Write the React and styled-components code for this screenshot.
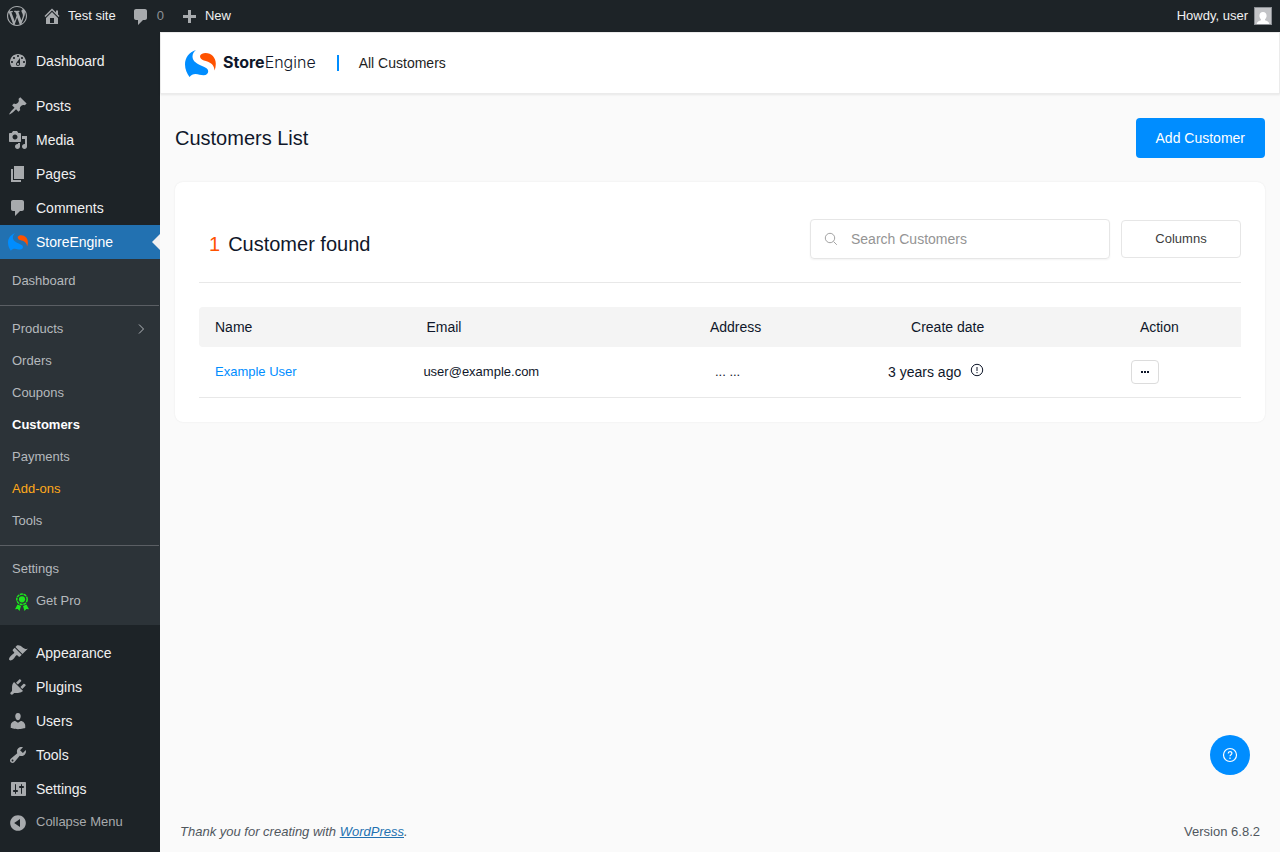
import React from "react";
import styled, { createGlobalStyle } from "styled-components";

const GlobalStyle = createGlobalStyle`
  * { box-sizing: border-box; }
  body {
    margin: 0;
    background: #fafafa;
    color: #0f172a;
    font-family: "Liberation Sans", Arial, sans-serif;
    font-size: 13px;
  }
  a { text-decoration: none; color: inherit; }
  button, input { font-family: inherit; }
`;

const paths = {
  wordpress: "M20 10c0-5.51-4.49-10-10-10C4.48 0 0 4.49 0 10c0 5.52 4.48 10 10 10 5.51 0 10-4.48 10-10zM7.78 15.37L4.37 6.22c.55-.02 1.17-.08 1.17-.08.5-.06.44-1.13-.06-1.11 0 0-1.45.11-2.37.11-.18 0-.37 0-.58-.01C4.12 2.69 6.87 1.11 10 1.11c2.33 0 4.45.87 6.05 2.34-.68-.11-1.65.39-1.65 1.58 0 .74.45 1.36.9 2.1.35.61.55 1.36.55 2.46 0 1.49-1.4 5-1.4 5l-3.03-8.37c.54-.02.82-.17.82-.17.5-.05.44-1.25-.06-1.22 0 0-1.44.12-2.38.12-.87 0-2.33-.12-2.33-.12-.5-.03-.56 1.2-.06 1.22l.92.08 1.26 3.41zM17.41 10c.24-.64.74-1.87.43-4.25.7 1.29 1.05 2.71 1.05 4.25 0 3.29-1.73 6.24-4.4 7.78.97-2.59 1.94-5.2 2.92-7.78zM6.1 18.09C3.12 16.65 1.11 13.53 1.11 10c0-1.3.23-2.48.72-3.59C3.25 10.3 4.67 14.2 6.1 18.09zm4.03-6.63l2.58 6.98c-.86.29-1.76.45-2.71.45-.79 0-1.57-.11-2.29-.33.81-2.38 1.62-4.74 2.42-7.1z",
  home: "M16 8.5l1.53 1.53-1.06 1.06L10 4.6l-6.47 6.49-1.06-1.06L10 2.5l4 4v-2h2v4zm-6-2.46l6 5.99V18H4v-5.97zM12 17v-5H8v5h4z",
  comments: "M5 2h9c1.1 0 2 .9 2 2v7c0 1.1-.9 2-2 2h-2l-5 5v-5H5c-1.1 0-2-.9-2-2V4c0-1.1.9-2 2-2z",
  barComments: "M5 3h9c1.1 0 2 .9 2 2v7c0 1.1-.9 2-2 2h-2l-5 5v-5H5c-1.1 0-2-.9-2-2V5c0-1.1.9-2 2-2z",
  plus: "M17 9v3h-5v5H9v-5H4V9h5V4h3v5h5z",
  dashboard: "M3.76 16h12.48c1.1-1.37 1.76-3.11 1.76-5 0-4.42-3.58-8-8-8s-8 3.58-8 8c0 1.89.66 3.63 1.76 5zM10 4c.55 0 1 .45 1 1s-.45 1-1 1-1-.45-1-1 .45-1 1-1zM6 6c.55 0 1 .45 1 1s-.45 1-1 1-1-.45-1-1 .45-1 1-1zm8 0c.55 0 1 .45 1 1s-.45 1-1 1-1-.45-1-1 .45-1 1-1zm-5.37 5.55L12 7v6c0 1.1-.9 2-2 2s-2-.9-2-2c0-.57.24-1.08.63-1.45zM4 10c.55 0 1 .45 1 1s-.45 1-1 1-1-.45-1-1 .45-1 1-1zm12 0c.55 0 1 .45 1 1s-.45 1-1 1-1-.45-1-1 .45-1 1-1zm-5 3c0-.55-.45-1-1-1s-1 .45-1 1 .45 1 1 1 1-.45 1-1z",
  posts: "M10.44 3.02l1.82-1.82 6.36 6.35-1.83 1.82c-1.05-.68-2.48-.57-3.41.36l-.75.75c-.92.93-1.04 2.35-.35 3.41l-1.83 1.82-2.41-2.41-2.8 2.79c-.42.42-3.38 2.71-3.8 2.29s1.86-3.39 2.28-3.81l2.79-2.79L4.1 9.36l1.83-1.82c1.05.69 2.48.57 3.4-.36l.75-.75c.93-.92 1.05-2.35.36-3.41z",
  media: "M13 11V4c0-.55-.45-1-1-1h-1.67L9 1H5L3.67 3H2c-.55 0-1 .45-1 1v7c0 .55.45 1 1 1h10c.55 0 1-.45 1-1zM7 4.5c1.38 0 2.5 1.12 2.5 2.5S8.38 9.5 7 9.5 4.5 8.38 4.5 7 5.62 4.5 7 4.5zM14 6h5v10.5c0 1.38-1.12 2.5-2.5 2.5S14 17.88 14 16.5s1.12-2.5 2.5-2.5c.17 0 .34.02.5.05V9h-3V6zm-4 8.05V13h2v3.5c0 1.38-1.12 2.5-2.5 2.5S7 17.88 7 16.5 8.12 14 9.5 14c.17 0 .34.02.5.05z",
  pages: "M6 15V2h10v13H6zm-1 1h8v2H3V5h2v11z",
  appearance: "M14.48 11.06L7.41 3.99l1.5-1.5c.5-.56 2.3-.47 3.51.32 1.21.8 1.43 1.28 2.91 2.1 1.18.64 2.45 1.26 4.45.85zm-.71.71L6.7 4.7 4.93 6.47c-.39.39-.39 1.02 0 1.41l1.06 1.06c.39.39.39 1.03 0 1.42-.6.6-1.43 1.11-2.21 1.69-.35.26-.7.53-1.01.84C1.43 14.23.4 16.08 1.4 17.07c.99 1 2.84-.03 4.18-1.36.31-.31.58-.66.85-1.02.57-.78 1.08-1.61 1.69-2.21.39-.39 1.02-.39 1.41 0l1.06 1.06c.39.39 1.02.39 1.41 0z",
  plugins: "M13.11 4.36L9.87 7.6 8 5.73l3.24-3.24c.35-.34 1.05-.2 1.56.32.52.51.66 1.21.31 1.55zm-8 1.77l.91-1.12 9.01 9.01-1.19.84c-.71.71-2.63 1.16-3.82 1.16H6.14L4.9 17.26c-.59.59-1.54.59-2.12 0-.59-.58-.59-1.53 0-2.12l1.24-1.24v-3.88c0-1.13.4-3.19 1.09-3.89zm7.26 3.97l3.24-3.24c.34-.35 1.04-.21 1.55.31.52.51.66 1.21.31 1.55l-3.24 3.25z",
  users: "M10 9.25c-2.27 0-2.73-3.44-2.73-3.44C7 4.02 7.82 2 9.97 2c2.16 0 2.98 2.02 2.71 3.81 0 0-.41 3.44-2.68 3.44zm0 2.57L12.72 10c2.39 0 4.52 2.33 4.52 4.53v2.49s-3.65 1.13-7.24 1.13c-3.65 0-7.24-1.13-7.24-1.13v-2.49c0-2.25 1.94-4.48 4.47-4.48z",
  tools: "M16.68 9.77c-1.34 1.34-3.3 1.67-4.95.99l-5.41 6.52c-.99.99-2.59.99-3.58 0s-.99-2.59 0-3.57l6.52-5.42c-.68-1.65-.35-3.61.99-4.95 1.28-1.28 3.12-1.62 4.72-1.06l-2.89 2.89 2.82 2.82 2.86-2.87c.53 1.58.18 3.39-1.08 4.65zM3.81 16.21c.4.39 1.04.39 1.43 0 .4-.4.4-1.04 0-1.43-.39-.4-1.03-.4-1.43 0-.39.39-.39 1.03 0 1.43z",
  settings: "M18 16V4c0-.55-.45-1-1-1H4c-.55 0-1 .45-1 1v12c0 .55.45 1 1 1h13c.55 0 1-.45 1-1zM8 11h1c.55 0 1 .45 1 1s-.45 1-1 1H8v1.500c0 .28-.22.5-.5.5s-.5-.22-.5-.5V13H6c-.55 0-1-.45-1-1s.45-1 1-1h1V5.500c0-.28.22-.5.5-.5s.5.22.5.5V11zm5-2h-1c-.55 0-1-.45-1-1s.45-1 1-1h1V5.500c0-.28.22-.5.5-.5s.5.22.5.5V7h1c.55 0 1 .45 1 1s-.45 1-1 1h-1v5.500c0 .28-.22.5-.5.5s-.5-.22-.5-.5V9z",
  collapse: "M10 2.16c4.33 0 7.84 3.51 7.84 7.84s-3.51 7.84-7.84 7.84S2.16 14.33 2.16 10 5.71 2.16 10 2.16zm2 11.72V6.12L6.18 9.97z",
};

const Svg = styled.svg`
  display: block;
  flex: none;
  fill: ${(props) => props.$color || "#a7aaad"};
`;

const Icon = ({ name, size = 20, color }) => (
  <Svg width={size} height={size} viewBox="0 0 20 20" $color={color} aria-hidden="true">
    <path fillRule="evenodd" d={paths[name]} />
  </Svg>
);

const Mark = ({ width, height }) => (
  <Svg width={width} height={height} viewBox="0 0 31 27" aria-hidden="true">
    <path
      fill="#008dff"
      d="M11 0C4 2 0 8 0 14.500c0 5 2 9 4.500 12.500 1.500-2 3.500-3 6-3 3 0 5 1.300 8 1.300 3.200 0 4.700-1.800 4.700-4 0-2.300-2-3.500-5-4.800C12 13.800 7.500 11.500 7.500 6.500 7.500 3.500 9 1.500 11 0z"
    />
    <path
      fill="#ff5200"
      d="M15.200 5.500C16 3.700 18 2.900 20.500 2.900c6 0 10.300 4.600 10.300 10.800 0 2.300-.4 4.500-1.200 6.700-.3-4.400-2.600-7-6.600-8.700-3-1.200-5.500-1.200-7-3-.7-.8-1.200-2.200-.8-3.200z"
    />
  </Svg>
);

const Award = () => (
  <Svg width="20" height="22" viewBox="-2 -4 20 22" $color="#1ee61e" aria-hidden="true">
    <circle cx="8" cy="6.300" r="5.200" fill="none" stroke="#1ee61e" strokeWidth="1.500" strokeDasharray="3 0.630" />
    <circle cx="8" cy="6.300" r="3.100" />
    <path d="M3.500 11.500L7 13 5.500 18 3.700 15.900 1 16.200zM12.500 11.500L9 13l1.500 5 1.800-2.100 2.700.3z" />
  </Svg>
);

const AdminBar = styled.header`
  display: flex;
  justify-content: space-between;
  height: 32px;
  padding: 0 8px 0 7px;
  background: #1d2327;
  color: #f0f0f1;
  line-height: 16px;
`;

const BarGroup = styled.div`
  display: flex;
  gap: 15px;
`;

const BarLink = styled.a`
  display: flex;
  align-items: center;
  gap: 6px;
  color: ${(props) => (props.$muted ? "#8c9196" : "#f0f0f1")};
`;

const Avatar = styled.svg`
  display: block;
  border: 1px solid #8c8f94;
`;

const Layout = styled.div`
  display: flex;
  min-height: calc(100vh - 32px);
`;

const Sidebar = styled.nav`
  flex: none;
  width: 160px;
  padding-top: 12px;
  background: #1d2327;
`;

const MenuLink = styled.a`
  position: relative;
  display: flex;
  align-items: center;
  gap: 8px;
  height: 34px;
  padding-left: 8px;
  margin-top: ${(props) => (props.$spaced ? 11 : 0)}px;
  font-size: 14px;
  color: ${(props) => (props.$active ? "#fff" : "#f0f0f1")};
  background: ${(props) => (props.$active ? "#2271b1" : "none")};

  &::after {
    content: "";
    display: ${(props) => (props.$active ? "block" : "none")};
    position: absolute;
    right: 0;
    top: 9px;
    border: 8px solid transparent;
    border-left: 0;
    border-right-color: #f0f0f1;
  }
`;

const CollapseButton = styled.button`
  display: flex;
  align-items: center;
  gap: 8px;
  height: 34px;
  padding: 0 0 0 8px;
  border: 0;
  background: none;
  font-size: 13px;
  line-height: 16px;
  color: #a7aaad;

  span { padding-bottom: 2px; }
`;

const SubMenu = styled.div`
  padding: 5px 0 9px;
  background: #2c3338;
`;

const SubLink = styled.a`
  display: flex;
  align-items: center;
  justify-content: ${(props) => (props.$arrow ? "space-between" : "flex-start")};
  gap: 4px;
  height: 32px;
  padding: 0 12px;
  font-weight: ${(props) => (props.$current ? 600 : 400)};
  color: ${(props) => props.$color || (props.$current ? "#fff" : "#b5b9bd")};
`;

const SubDivider = styled.hr`
  height: 1px;
  margin: 9px 1px 6px 0;
  border: 0;
  background: #5b5f64;
`;

const Main = styled.main`
  display: flex;
  flex: 1;
  flex-direction: column;
  min-width: 0;
`;

const TopBar = styled.div`
  display: flex;
  align-items: center;
  height: 62px;
  padding-left: 24px;
  background: #fff;
  border: 1px solid #ebebeb;
  box-shadow: 0 1px 2px rgba(0, 0, 0, 0.08);
`;

const Logo = styled.a`
  display: flex;
  align-items: center;
  gap: 7px;
  font-family: Inter, sans-serif;
  font-size: 16px;
  font-weight: 300;
  color: #0f172a;

  span { padding-bottom: 2px; }
  b { font-weight: 700; }
`;

const Crumb = styled.span`
  display: flex;
  align-items: center;
  gap: 20px;
  margin-left: 21px;
  font-size: 14px;
  color: #1e1e1e;

  &::before {
    content: "";
    width: 2px;
    height: 16px;
    background: #008dff;
  }
`;

const Content = styled.section`
  flex: 1;
  padding: 24px 15px;
`;

const PageHead = styled.div`
  display: flex;
  align-items: center;
  justify-content: space-between;
  margin-bottom: 24px;
`;

const Heading = styled.h1`
  margin: 0;
  font-size: 20px;
  font-weight: 400;
`;

const PrimaryButton = styled.button`
  height: 40px;
  padding: 0 20px;
  border: 0;
  border-radius: 4px;
  background: #008dff;
  color: #fff;
  font-size: 14px;
`;

const Card = styled.div`
  padding: 24px;
  border-radius: 8px;
  background: #fff;
  box-shadow: 0 0 2px rgba(0, 0, 0, 0.08);
`;

const CardHead = styled.div`
  display: flex;
  align-items: center;
  justify-content: space-between;
  height: 77px;
  padding: 0 0 10px 10px;
  margin-bottom: 24px;
  border-bottom: 1px solid #e8e8e8;
`;

const Count = styled.h2`
  display: flex;
  gap: 8px;
  margin: 0;
  padding-top: 10px;
  font-size: 20px;
  font-weight: 400;

  span { color: #ff5200; }
`;

const Filters = styled.div`
  display: flex;
  align-items: center;
  gap: 11px;
`;

const SearchBox = styled.label`
  display: flex;
  align-items: center;
  gap: 13px;
  width: 300px;
  height: 40px;
  padding: 0 13px;
  border: 1px solid #e6e6e6;
  border-radius: 4px;
  box-shadow: 0 1px 2px rgba(0, 0, 0, 0.05);
`;

const SearchInput = styled.input`
  flex: 1;
  min-width: 0;
  padding: 0;
  border: 0;
  outline: 0;
  background: none;
  font-size: 14px;

  &::placeholder { color: #949494; }
`;

const ColumnsButton = styled.button`
  width: 120px;
  height: 38px;
  padding: 0 0 2px;
  border: 1px solid #e6e6e6;
  border-radius: 4px;
  background: #fff;
  color: #3c3c3c;
  font-size: 13px;
`;

const Table = styled.table`
  width: 100%;
  table-layout: fixed;
  border-collapse: separate;
  border-spacing: 0;
`;

const Th = styled.th`
  width: ${(props) => props.$width};
  height: 40px;
  padding: 0 0 0 ${(props) => props.$pad}px;
  background: #f4f4f4;
  font-size: 14px;
  font-weight: 400;
  text-align: left;

  &:first-child { border-radius: 4px 0 0 4px; }
`;

const Td = styled.td`
  height: 51px;
  padding: 0 0 0 ${(props) => props.$pad}px;
  border-bottom: 1px solid #e8e8e8;
  font-size: 13px;
  line-height: 16px;
`;

const NameLink = styled.a`
  color: #008dff;
`;

const DateCell = styled.span`
  display: flex;
  align-items: center;
  gap: 9px;
  font-size: 14px;
`;

const MoreButton = styled.button`
  display: flex;
  align-items: center;
  justify-content: center;
  width: 28px;
  height: 24px;
  padding: 0;
  border: 1px solid #dcdcdc;
  border-radius: 4px;
  background: #fff;
`;

const HelpButton = styled.button`
  position: fixed;
  right: 30px;
  bottom: 77px;
  display: flex;
  align-items: center;
  justify-content: center;
  width: 40px;
  height: 40px;
  padding: 0;
  border: 0;
  border-radius: 50%;
  background: #008dff;
`;

const Footer = styled.footer`
  display: flex;
  justify-content: space-between;
  padding: 13px 20px;
  color: #50575e;

  a {
    color: #2271b1;
    text-decoration: underline;
  }
`;

const topItems = [
  { icon: "dashboard", label: "Dashboard" },
  { icon: "posts", label: "Posts", spaced: true },
  { icon: "media", label: "Media" },
  { icon: "pages", label: "Pages" },
  { icon: "comments", label: "Comments" },
];

const bottomItems = [
  { icon: "appearance", label: "Appearance", spaced: true },
  { icon: "plugins", label: "Plugins" },
  { icon: "users", label: "Users" },
  { icon: "tools", label: "Tools" },
  { icon: "settings", label: "Settings" },
];

const columns = [
  { label: "Name", width: "20%", pad: 16 },
  { label: "Email", width: "27.5%", pad: 19 },
  { label: "Address", width: "17%", pad: 16 },
  { label: "Create date", width: "23.4%", pad: 40 },
  { label: "Action", width: "12.1%", pad: 25 },
];

const MenuItems = ({ items }) =>
  items.map((item) => (
    <MenuLink href="#" key={item.label} $spaced={item.spaced}>
      <Icon name={item.icon} />
      {item.label}
    </MenuLink>
  ));

const SideMenu = () => (
  <Sidebar>
    <MenuItems items={topItems} />
    <MenuLink href="#" $active>
      <Mark width={20} height={18} />
      StoreEngine
    </MenuLink>
    <SubMenu>
      <SubLink href="#">Dashboard</SubLink>
      <SubDivider />
      <SubLink href="#" $arrow>
        Products
        <svg width="12" height="12" viewBox="0 0 12 12" fill="none" stroke="#b5b9bd" aria-hidden="true">
          <path d="M3 2.500l4.500 4.500L3 11.500" />
        </svg>
      </SubLink>
      <SubLink href="#">Orders</SubLink>
      <SubLink href="#">Coupons</SubLink>
      <SubLink href="#" $current>Customers</SubLink>
      <SubLink href="#">Payments</SubLink>
      <SubLink href="#" $color="#ffa91b">Add-ons</SubLink>
      <SubLink href="#">Tools</SubLink>
      <SubDivider />
      <SubLink href="#">Settings</SubLink>
      <SubLink href="#">
        <Award />
        Get Pro
      </SubLink>
    </SubMenu>
    <MenuItems items={bottomItems} />
    <CollapseButton type="button">
      <Icon name="collapse" />
      <span>Collapse Menu</span>
    </CollapseButton>
  </Sidebar>
);

const CustomersTable = () => (
  <Table>
    <thead>
      <tr>
        {columns.map((col) => (
          <Th key={col.label} $width={col.width} $pad={col.pad}>{col.label}</Th>
        ))}
      </tr>
    </thead>
    <tbody>
      <tr>
        <Td $pad={16}><NameLink href="#">Example User</NameLink></Td>
        <Td $pad={16}>user@example.com</Td>
        <Td $pad={21}>... ...</Td>
        <Td $pad={17}>
          <DateCell>
            3 years ago
            <svg width="14" height="18" viewBox="0 0 14 18" fill="none" stroke="#0f172a" aria-hidden="true">
              <circle cx="7" cy="7" r="5.700" />
              <path d="M7 4v4M7 9v1.200" />
            </svg>
          </DateCell>
        </Td>
        <Td $pad={16}>
          <MoreButton type="button" aria-label="More actions">
            <svg width="8" height="2" viewBox="0 0 8 2" fill="#0f172a" aria-hidden="true">
              <path d="M0 0h2v2H0zM3 0h2v2H3zM6 0h2v2H6z" />
            </svg>
          </MoreButton>
        </Td>
      </tr>
    </tbody>
  </Table>
);

const App = () => (
  <>
    <GlobalStyle />
    <AdminBar>
      <BarGroup>
        <BarLink href="#" aria-label="About WordPress"><Icon name="wordpress" /></BarLink>
        <BarLink href="#"><Icon name="home" />Test site</BarLink>
        <BarLink href="#" $muted><Icon name="barComments" />0</BarLink>
        <BarLink href="#"><Icon name="plus" />New</BarLink>
      </BarGroup>
      <BarLink href="#">
        Howdy, user
        <Avatar width="18" height="18" viewBox="0 0 16 16" aria-hidden="true">
          <path fill="#c3c4c7" d="M0 0h16v16H0z" />
          <path fill="#fff" d="M8 4c2.200 0 3.600 1.500 3.600 3.700 0 1.600-.8 2.900-1.600 3.500v1c2 .6 4 1.300 4.300 3.800H1.700C2 13.500 4 12.800 6 12.200v-1c-.8-.6-1.600-1.900-1.600-3.500C4.400 5.500 5.800 4 8 4z" />
        </Avatar>
      </BarLink>
    </AdminBar>
    <Layout>
      <SideMenu />
      <Main>
        <TopBar>
          <Logo href="#">
            <Mark width={31} height={27} />
            <span><b>Store</b>Engine</span>
          </Logo>
          <Crumb>All Customers</Crumb>
        </TopBar>
        <Content>
          <PageHead>
            <Heading>Customers List</Heading>
            <PrimaryButton type="button">Add Customer</PrimaryButton>
          </PageHead>
          <Card>
            <CardHead>
              <Count><span>1</span> Customer found</Count>
              <Filters>
                <SearchBox>
                  <svg width="14" height="14" viewBox="0 0 14 14" fill="none" stroke="#a3a3a3" aria-hidden="true">
                    <circle cx="6" cy="6" r="4.700" />
                    <path d="M9.500 9.500l3.300 3.300" />
                  </svg>
                  <SearchInput type="search" aria-label="Search Customers" placeholder="Search Customers" />
                </SearchBox>
                <ColumnsButton type="button">Columns</ColumnsButton>
              </Filters>
            </CardHead>
            <CustomersTable />
          </Card>
        </Content>
        <Footer>
          <em>Thank you for creating with <a href="#">WordPress</a>.</em>
          <span>Version 6.8.2</span>
        </Footer>
      </Main>
    </Layout>
    <HelpButton type="button" aria-label="Help">
      <svg width="16" height="16" viewBox="0 0 16 16" fill="none" stroke="#fff" strokeWidth="1.200" aria-hidden="true">
        <circle cx="8" cy="8" r="6.500" />
        <path d="M6.200 6.500c0-2.600 3.700-2.500 3.700-.2C9.900 7.800 8 7.600 8 9.300M8 10.600v1.300" />
      </svg>
    </HelpButton>
  </>
);

export default App;
